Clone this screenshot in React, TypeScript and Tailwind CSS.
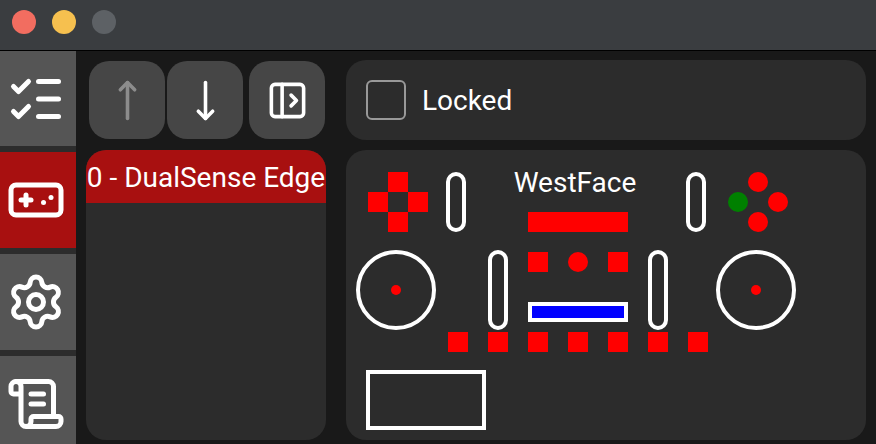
import React from 'react';
import { ListChecks, Gamepad, Settings, ScrollText, MoveUp, MoveDown, PanelLeftOpen } from 'lucide-react';

const pill = 'w-5 shrink-0 rounded-full border-4 border-white';

const Tab = ({ active, first, icon }: { active?: boolean; first?: boolean; icon: React.ReactNode }) => (
  <div className={`${first ? 'h-[95px]' : 'h-24'} shrink-0 flex items-center justify-center pr-1 text-white ${active ? 'bg-[#a81010]' : 'bg-[#555555]'}`}>
    {icon}
  </div>
);

const ToolButton = ({ icon, dim }: { icon: React.ReactNode; dim?: boolean }) => (
  <button className={`w-[76px] h-[78px] rounded-[20px] bg-[#464646] flex items-center justify-center ${dim ? 'text-[#8c8c8c]' : 'text-white'}`}>
    {icon}
  </button>
);

const Square = ({ round }: { round?: boolean }) => (
  <div className={`w-5 h-5 bg-[#ff0000] ${round ? 'rounded-full' : ''}`} />
);

const Stick = () => (
  <div className="w-20 h-20 shrink-0 rounded-full border-4 border-white flex items-center justify-center">
    <div className="w-2.5 h-2.5 rounded-full bg-[#ff0000]" />
  </div>
);

const Controller = () => (
  <div className="h-[290px] w-[520px] rounded-[20px] bg-[#2c2c2c] flex flex-col pt-[22px]">
    {/* triggers, dpad, face buttons */}
    <div className="flex h-[60px] pl-[22px]">
      <div className="grid grid-cols-3 w-[60px]">
        <div />
        <Square />
        <div />
        <Square />
        <div />
        <Square />
        <div />
        <Square />
        <div />
      </div>
      <div className={`${pill} ml-[18px]`} />
      <div className="w-[140px] ml-[42px] flex flex-col items-center justify-between">
        <div className="pr-1.5 text-white text-[28px] leading-[22px]">WestFace</div>
        <div className="w-[100px] h-5 bg-[#ff0000]" />
      </div>
      <div className={`${pill} ml-[38px]`} />
      <div className="grid grid-cols-3 w-[60px] ml-[22px]">
        <div />
        <Square round />
        <div />
        <div className="w-5 h-5 rounded-full bg-[#008000]" />
        <div />
        <Square round />
        <div />
        <Square round />
        <div />
      </div>
    </div>

    {/* sticks and center cluster */}
    <div className="flex h-20 mt-[18px] pl-2.5">
      <Stick />
      <div className={`${pill} ml-[52px]`} />
      <div className="w-[100px] ml-5 pt-0.5 pb-2 flex flex-col justify-between">
        <div className="flex justify-between">
          <Square />
          <Square round />
          <Square />
        </div>
        <div className="h-5 border-4 border-white bg-[#0000ff]" />
      </div>
      <div className={`${pill} ml-5`} />
      <div className="ml-12">
        <Stick />
      </div>
    </div>

    <div className="flex gap-5 mt-0.5 pl-[102px]">
      {[0, 1, 2, 3, 4, 5, 6].map((i) => (
        <Square key={i} />
      ))}
    </div>

    <div className="w-[120px] h-[60px] mt-[18px] ml-5 border-4 border-white" />
  </div>
);

export default function App() {
  return (
    <div className="w-[876px] h-[444px] overflow-hidden flex flex-col bg-[#191919] font-['Roboto',sans-serif]">
      {/* title bar */}
      <div className="h-[51px] shrink-0 flex items-center gap-4 pl-3 pb-[6px] bg-[#3a3d40] border-b border-black">
        <span className="w-6 h-6 rounded-full bg-[#f26d60]" />
        <span className="w-6 h-6 rounded-full bg-[#f6c04f]" />
        <span className="w-6 h-6 rounded-full bg-[#5d6165]" />
      </div>

      <div className="flex flex-1 min-h-0">
        <div className="w-[76px] shrink-0 flex flex-col gap-1.5 bg-[#2c2c2c] overflow-hidden">
          <Tab first icon={<ListChecks size={60} />} />
          <Tab active icon={<Gamepad size={60} />} />
          <Tab icon={<Settings size={60} />} />
          <Tab icon={<ScrollText size={60} />} />
        </div>

        <div className="w-[240px] shrink-0 ml-2.5 mr-5 flex flex-col">
          <div className="flex pl-[3px] pt-2.5 pb-[11px]">
            <ToolButton dim icon={<MoveUp size={43} />} />
            <div className="ml-0.5">
              <ToolButton icon={<MoveDown size={43} />} />
            </div>
            <div className="ml-1.5">
              <ToolButton icon={<PanelLeftOpen size={43} />} />
            </div>
          </div>
          <div className="h-[290px] rounded-[20px] bg-[#2c2c2c] overflow-hidden">
            <div className="h-[53px] bg-[#a81010] text-white text-[28px] leading-[55px] text-center whitespace-nowrap">
              0 - DualSense Edge
            </div>
          </div>
        </div>

        <div className="w-[520px] shrink-0 flex flex-col gap-2.5 pt-[9px]">
          <div className="h-20 rounded-[20px] bg-[#2c2c2c] flex items-center pl-5 gap-4">
            <div className="w-10 h-10 rounded-md border-2 border-[#999999]" />
            <span className="pt-0.5 text-white text-[28px]">Locked</span>
          </div>
          <Controller />
        </div>
      </div>
    </div>
  );
}
